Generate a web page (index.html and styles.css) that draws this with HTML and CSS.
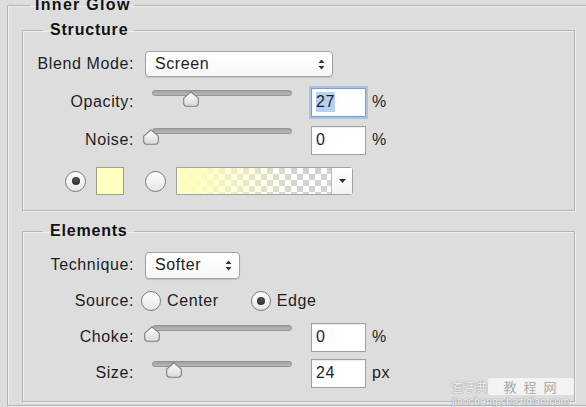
FILE: index.html
```html
<!DOCTYPE html>
<html>
<head>
<meta charset="utf-8">
<title>Inner Glow</title>
<link rel="stylesheet" href="styles.css">
</head>
<body>
<fieldset class="group outer">
  <legend class="title outer-title">Inner Glow</legend>

  <fieldset class="group section structure">
    <legend class="title">Structure</legend>
    <div class="rows">
      <div class="row">
        <span class="label">Blend Mode:</span>
        <div class="select select-wide">
          <span>Screen</span>
          <svg class="updown" width="7" height="11" viewBox="0 0 7 11"><path d="M3.5 0.5 L6.5 4 H0.5 Z M3.5 10.5 L6.5 7 H0.5 Z" fill="#333"/></svg>
        </div>
      </div>
      <div class="row">
        <span class="label">Opacity:</span>
        <div class="slider">
          <div class="track"></div>
          <svg class="thumb" style="left:31px" width="16" height="16" viewBox="0 0 16 16"><defs><linearGradient id="tg1" x1="0" y1="0" x2="0" y2="1"><stop offset="0" stop-color="#ffffff"/><stop offset="1" stop-color="#d9d9d9"/></linearGradient></defs><path d="M8 0.8 L15.3 7.2 V12.3 Q15.3 15.2 12.4 15.2 H3.6 Q0.7 15.2 0.7 12.3 V7.2 Z" fill="url(#tg1)" stroke="#7d7d7d" stroke-width="1.1"/></svg>
        </div>
        <div class="field focused"><span class="selected">27</span></div>
        <span class="unit">%</span>
      </div>
      <div class="row">
        <span class="label">Noise:</span>
        <div class="slider">
          <div class="track"></div>
          <svg class="thumb" style="left:-9px" width="16" height="16" viewBox="0 0 16 16"><defs><linearGradient id="tg2" x1="0" y1="0" x2="0" y2="1"><stop offset="0" stop-color="#ffffff"/><stop offset="1" stop-color="#d9d9d9"/></linearGradient></defs><path d="M8 0.8 L15.3 7.2 V12.3 Q15.3 15.2 12.4 15.2 H3.6 Q0.7 15.2 0.7 12.3 V7.2 Z" fill="url(#tg2)" stroke="#7d7d7d" stroke-width="1.1"/></svg>
        </div>
        <div class="field"><span>0</span></div>
        <span class="unit">%</span>
      </div>
      <div class="row row-colors">
        <span class="radio checked"></span>
        <span class="swatch"></span>
        <span class="radio"></span>
        <div class="gradient-picker">
          <span class="gradient"></span>
          <span class="picker-btn"><svg width="7" height="4" viewBox="0 0 7 4"><path d="M0 0 H7 L3.5 4 Z" fill="#333"/></svg></span>
        </div>
      </div>
    </div>
  </fieldset>

  <fieldset class="group section elements">
    <legend class="title">Elements</legend>
    <div class="rows">
      <div class="row">
        <span class="label">Technique:</span>
        <div class="select select-narrow">
          <span>Softer</span>
          <svg class="updown" width="7" height="11" viewBox="0 0 7 11"><path d="M3.5 0.5 L6.5 4 H0.5 Z M3.5 10.5 L6.5 7 H0.5 Z" fill="#333"/></svg>
        </div>
      </div>
      <div class="row">
        <span class="label">Source:</span>
        <span class="radio radio-source"></span>
        <span class="option">Center</span>
        <span class="radio checked radio-edge"></span>
        <span class="option">Edge</span>
      </div>
      <div class="row">
        <span class="label">Choke:</span>
        <div class="slider">
          <div class="track"></div>
          <svg class="thumb" style="left:-8px" width="16" height="16" viewBox="0 0 16 16"><defs><linearGradient id="tg3" x1="0" y1="0" x2="0" y2="1"><stop offset="0" stop-color="#ffffff"/><stop offset="1" stop-color="#d9d9d9"/></linearGradient></defs><path d="M8 0.8 L15.3 7.2 V12.3 Q15.3 15.2 12.4 15.2 H3.6 Q0.7 15.2 0.7 12.3 V7.2 Z" fill="url(#tg3)" stroke="#7d7d7d" stroke-width="1.1"/></svg>
        </div>
        <div class="field"><span>0</span></div>
        <span class="unit">%</span>
      </div>
      <div class="row">
        <span class="label">Size:</span>
        <div class="slider">
          <div class="track"></div>
          <svg class="thumb" style="left:14px" width="16" height="16" viewBox="0 0 16 16"><defs><linearGradient id="tg4" x1="0" y1="0" x2="0" y2="1"><stop offset="0" stop-color="#ffffff"/><stop offset="1" stop-color="#d9d9d9"/></linearGradient></defs><path d="M8 0.8 L15.3 7.2 V12.3 Q15.3 15.2 12.4 15.2 H3.6 Q0.7 15.2 0.7 12.3 V7.2 Z" fill="url(#tg4)" stroke="#7d7d7d" stroke-width="1.1"/></svg>
        </div>
        <div class="field"><span>24</span></div>
        <span class="unit">px</span>
      </div>
    </div>
  </fieldset>
</fieldset>

<div class="watermark">
  <div class="wm-top"><span class="wm-brand">查字典</span><span class="wm-box">教 程 网</span></div>
  <div class="wm-url">jiaocheng.chazidian.com</div>
</div>
</body>
</html>
```

FILE: styles.css
```css
html, body {
  margin: 0;
  padding: 0;
  background: #dddddd;
  overflow: hidden;
}
body {
  width: 586px;
  height: 407px;
  position: relative;
  font-family: "Liberation Sans", Arial, sans-serif;
  font-size: 16px;
  color: #1e1e1e;
  letter-spacing: 0.6px;
}

.group {
  border: 1px solid #b4b4b4;
  margin: 0;
  min-width: 0;
  box-shadow: inset 1px 1px 0 #efefef, 1px 1px 0 #efefef;
}

.outer {
  margin: -3px -12px 0 7px;
  padding: 8px 22px 3px 14px;
}

.title {
  font-weight: bold;
  font-size: 16px;
  line-height: 18px;
  color: #111;
  letter-spacing: 0.8px;
}
.outer .outer-title {
  line-height: 16px;
  margin-left: 9px;
  padding: 0 3px 0 4px;
  letter-spacing: 1.3px;
}

.section {
  padding: 10px 12px 14px 12px;
}
.section .title {
  margin-left: 8px;
  padding: 0 6px 0 7px;
}
.elements {
  margin-top: 11px;
  padding-bottom: 13px;
}

.rows {
  display: flex;
  flex-direction: column;
  gap: 8px;
}
.elements .rows {
  gap: 6px;
}

.row {
  display: flex;
  align-items: center;
  height: 30px;
}
.row-colors {
  margin-top: 3px;
  padding-left: 30px;
}

.label {
  width: 99px;
  text-align: right;
  white-space: nowrap;
  flex: none;
}

/* selects */
.select {
  margin-left: 11px;
  height: 26px;
  box-sizing: border-box;
  border: 1px solid #a3a3a3;
  border-radius: 4px;
  background: linear-gradient(#ffffff, #f7f7f7);
  box-shadow: 0 1px 1px rgba(0, 0, 0, 0.12);
  display: flex;
  align-items: center;
  justify-content: space-between;
  padding: 0 7px 0 9px;
}
.select-wide { width: 188px; }
.select-narrow { width: 95px; height: 27px; }
.updown { display: block; }

/* sliders */
.slider {
  position: relative;
  align-self: stretch;
  width: 140px;
  margin-left: 18px;
  flex: none;
}
.track {
  margin-top: 3px;
  height: 6px;
  box-sizing: border-box;
  border-radius: 3px;
  border: 1px solid #939393;
  background: linear-gradient(#a2a2a2, #b8b8b8);
}
.thumb {
  position: absolute;
  top: 4px;
  display: block;
}

/* number fields */
.field {
  margin-left: 19px;
  width: 55px;
  height: 29px;
  box-sizing: border-box;
  border: 1px solid #a0a0a0;
  background: #ffffff;
  box-shadow: inset 0 1px 1px rgba(0, 0, 0, 0.08);
  display: flex;
  align-items: center;
  padding-left: 4px;
  flex: none;
}
.field.focused {
  border-color: #7a9fd0;
  box-shadow: 0 0 0 2px #a9c3e6;
}
.selected {
  background: #b5d1f3;
  padding: 1px 0;
}
.unit {
  margin-left: 6px;
}

/* radios */
.radio {
  width: 21px;
  height: 21px;
  box-sizing: border-box;
  border-radius: 50%;
  border: 1px solid #7b7b7b;
  background: linear-gradient(#ffffff, #e6e6e6);
  display: flex;
  align-items: center;
  justify-content: center;
  flex: none;
}
.radio.checked::after {
  content: "";
  width: 8px;
  height: 8px;
  border-radius: 50%;
  background: radial-gradient(circle at 50% 35%, #555, #222);
}
.row-colors .radio + .swatch { margin-left: 10px; }
.swatch {
  width: 28px;
  height: 28px;
  box-sizing: border-box;
  border: 1px solid #a39e82;
  background: #ffffc2;
  margin-right: 21px;
}
.gradient-picker {
  margin-left: 10px;
  width: 177px;
  height: 28px;
  box-sizing: border-box;
  border: 1px solid #a3a3a3;
  border-radius: 0 3px 3px 0;
  display: flex;
  background: #fff;
}
.gradient {
  flex: 1;
  background:
    linear-gradient(to right, #ffffc0 0%, rgba(255, 255, 192, 0.9) 15%, rgba(255, 255, 192, 0) 80%),
    repeating-conic-gradient(#d2d2d2 0 25%, #ffffff 0 50%) 0 0 / 12px 12px;
}
.picker-btn {
  width: 20px;
  border-left: 1px solid #b8b8b8;
  background: linear-gradient(#ffffff, #f4f4f4);
  display: flex;
  align-items: center;
  justify-content: center;
}

.radio-source { margin-left: 7px; width: 20px; height: 20px; }
.radio-edge { margin-left: 32px; width: 20px; height: 20px; }
.option { margin-left: 6px; }

/* watermark overlay */
.watermark {
  position: absolute;
  left: 452px;
  top: 378px;
  width: 122px;
  font-family: "Noto Sans CJK SC", sans-serif;
  letter-spacing: 0;
  white-space: nowrap;
}
.wm-top {
  display: flex;
  align-items: center;
  height: 17px;
}
.wm-brand {
  font-size: 12px;
  line-height: 17px;
  letter-spacing: 0;
  color: #f4f4f4;
  text-shadow: 0 0 1px #8e8e8e, 0 0 1px #8e8e8e;
  width: 36px;
  flex: none;
}
.wm-box {
  flex: 1;
  background: #f3f3f3;
  border-radius: 2px;
  font-size: 13px;
  line-height: 17px;
  color: #a9a9a9;
  text-align: center;
  letter-spacing: 2px;
}
.wm-url {
  margin-top: 1px;
  font-family: "Liberation Sans", sans-serif;
  font-size: 10.5px;
  line-height: 11px;
  color: #f4f4f4;
  text-shadow: 0 0 1px #909090, 0 0 1px #909090;
  letter-spacing: 0.1px;
}
```
